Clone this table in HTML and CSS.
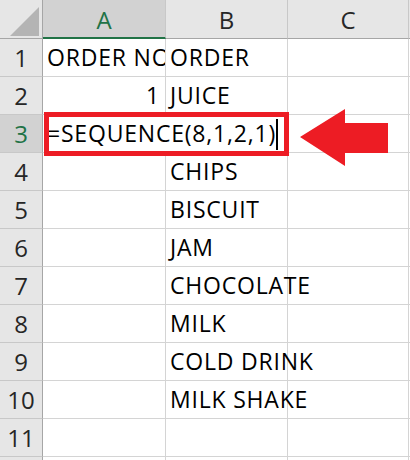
FILE: index.html
```html
<!DOCTYPE html>
<html>
<head>
<meta charset="utf-8">
<link rel="stylesheet" href="styles.css">
</head>
<body>
<div class="sheet">
  <div class="grid">
    <div class="corner"><svg class="tri" width="42" height="38" viewBox="0 0 42 38"><polygon points="10,36 39,36 39,7" fill="#b4b4b4"/></svg></div>
    <div class="colhead sel">A</div>
    <div class="colhead">B</div>
    <div class="colhead">C</div>
    <div class="colhead last"></div>

    <div class="rowhead">1</div><div class="cell clip">ORDER NO</div><div class="cell">ORDER</div><div class="cell"></div><div class="cell last"></div>
    <div class="rowhead">2</div><div class="cell num">1</div><div class="cell">JUICE</div><div class="cell"></div><div class="cell last"></div>
    <div class="rowhead sel">3</div><div class="cell edit">=SEQUENCE(8,1,2,1)<span class="caret"></span></div><div class="cell"></div><div class="cell"></div><div class="cell last"></div>
    <div class="rowhead">4</div><div class="cell"></div><div class="cell">CHIPS</div><div class="cell"></div><div class="cell last"></div>
    <div class="rowhead">5</div><div class="cell"></div><div class="cell">BISCUIT</div><div class="cell"></div><div class="cell last"></div>
    <div class="rowhead">6</div><div class="cell"></div><div class="cell">JAM</div><div class="cell"></div><div class="cell last"></div>
    <div class="rowhead">7</div><div class="cell"></div><div class="cell">CHOCOLATE</div><div class="cell"></div><div class="cell last"></div>
    <div class="rowhead">8</div><div class="cell"></div><div class="cell">MILK</div><div class="cell"></div><div class="cell last"></div>
    <div class="rowhead">9</div><div class="cell"></div><div class="cell">COLD DRINK</div><div class="cell"></div><div class="cell last"></div>
    <div class="rowhead">10</div><div class="cell"></div><div class="cell">MILK SHAKE</div><div class="cell"></div><div class="cell last"></div>
    <div class="rowhead">11</div><div class="cell"></div><div class="cell"></div><div class="cell"></div><div class="cell last"></div>
    <div class="rowhead"></div><div class="cell"></div><div class="cell"></div><div class="cell"></div><div class="cell last"></div>
  </div>
  <div class="redbox"></div>
  <svg class="arrow" width="90" height="60" viewBox="298 108 92 60"><polygon points="300,137 345,109 345,123 388,123 388,153 345,153 345,166" fill="#ed1c24"/></svg>
</div>
</body>
</html>
```

FILE: styles.css
```css
html, body {
  margin: 0;
  padding: 0;
  background: #ffffff;
}
.sheet {
  position: relative;
  width: 410px;
  height: 460px;
  overflow: hidden;
  font-family: "Open Sans", "Noto Sans", sans-serif;
}
.grid {
  display: grid;
  grid-template-columns: 43px 123px 122px 121px 40px;
  grid-template-rows: 39px repeat(12, 38px);
}
.grid > div {
  box-sizing: border-box;
  border-right: 1px solid #d4d4d4;
  border-bottom: 1px solid #d4d4d4;
  white-space: nowrap;
}
.corner {
  background: #e6e6e6;
  border-right-color: #a6a6a6 !important;
  border-bottom-color: #a6a6a6 !important;
  position: relative;
}
.tri {
  display: block;
}
.colhead {
  background: #e6e6e6;
  border-right-color: #c8c8c8 !important;
  border-bottom-color: #a6a6a6 !important;
  color: #262626;
  font-size: 24px;
  line-height: 36px;
  padding-top: 2px;
  text-align: center;
}
.colhead.sel {
  background: #d2d2d2;
  color: #217346;
  border-bottom: 2px solid #217346 !important;
}
.rowhead {
  background: #e6e6e6;
  border-right-color: #a6a6a6 !important;
  border-bottom-color: #c8c8c8 !important;
  color: #262626;
  font-size: 24px;
  line-height: 37px;
  text-align: center;
}
.rowhead.sel {
  background: #d2d2d2;
  color: #217346;
}
.cell {
  font-size: 23px;
  letter-spacing: 0.8px;
  line-height: 37px;
  padding-left: 4px;
  color: #000;
}
.cell.clip {
  overflow: hidden;
}
.cell.num {
  text-align: right;
  padding-right: 5px;
}
.cell.edit {
  position: relative;
  z-index: 1;
  border-right-color: transparent !important;
}
.caret {
  display: inline-block;
  width: 1.5px;
  height: 31px;
  background: #000;
  vertical-align: -8px;
  margin-left: 0px;
}
.redbox {
  position: absolute;
  left: 44px;
  top: 112px;
  width: 245px;
  height: 44px;
  box-sizing: border-box;
  border: 5px solid #ed1c24;
  z-index: 2;
}
.arrow {
  position: absolute;
  left: 298px;
  top: 108px;
  width: 92px;
  height: 60px;
}
```
